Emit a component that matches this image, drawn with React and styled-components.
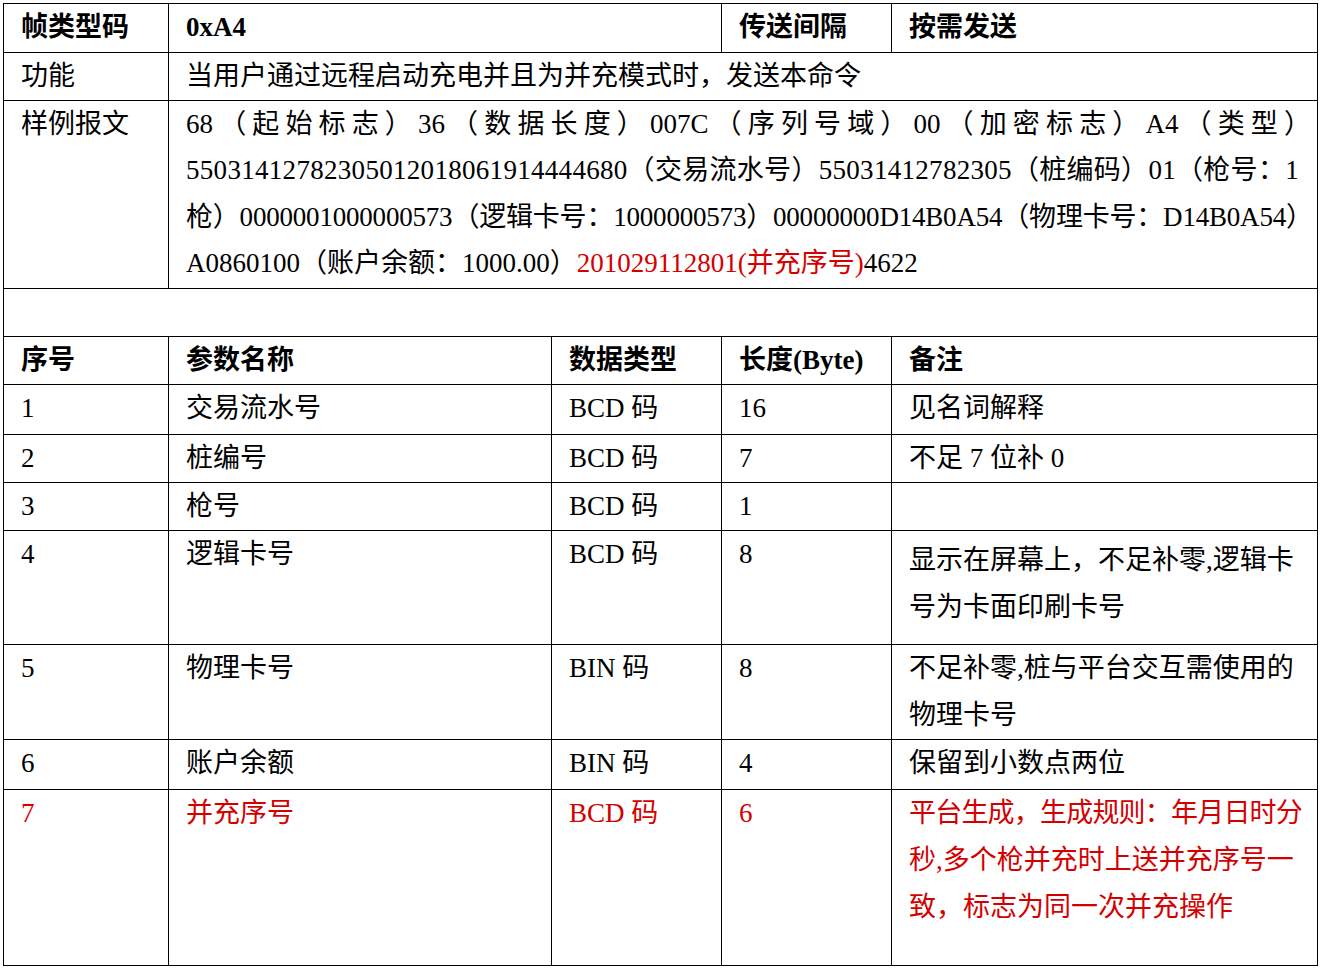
import React from 'react';
import styled, { createGlobalStyle } from 'styled-components';

const GlobalStyle = createGlobalStyle`
  body {
    margin: 0;
    background: #fff;
    font-family: "Liberation Serif", "Noto Sans CJK SC", serif;
  }
`;

const Page = styled.div`
  padding: 3px 0 0 3px;
`;

const Table = styled.table`
  border-collapse: collapse;
  table-layout: fixed;
  width: 1314px;
  font-size: 27px;
`;

const Col = styled.col`
  width: ${p => p.$w}px;
`;

const Row = styled.tr`
  height: ${p => p.$h}px;
`;

const Cell = styled.td`
  box-sizing: border-box;
  border: 1px solid #000;
  padding: ${p => (p.$drop ? 6 : 0)}px 2px 0 17px;
  vertical-align: top;
  line-height: 47px;
  white-space: nowrap;
  overflow: hidden;
  color: ${p => (p.$red ? '#d40000' : '#000')};
  font-weight: ${p => (p.$bold ? 700 : 400)};
`;

const Line = styled.div`
  text-align: ${p => (p.$spread ? 'justify' : 'left')};
  text-align-last: ${p => (p.$spread ? 'justify' : 'auto')};
  letter-spacing: ${p => p.$track || 0}px;
  padding-right: ${p => (p.$spread ? 4 : 0)}px;
`;

const SampleLine = styled(Line)`
  line-height: 46.5px;
`;

const Red = styled.span`
  color: #d40000;
`;

const sampleLines = [
  { text: '68（起始标志）36（数据长度）007C（序列号域）00（加密标志）A4（类型）', spread: true },
  { text: '55031412782305012018061914444680（交易流水号）55031412782305（桩编码）01（枪号：1', track: 0.3 },
  { text: '枪）0000001000000573（逻辑卡号：1000000573）00000000D14B0A54（物理卡号：D14B0A54）', track: -0.2 },
];

const params = [
  { no: '1', name: '交易流水号', type: 'BCD 码', len: '16', note: ['见名词解释'], h: 49.5 },
  { no: '2', name: '桩编号', type: 'BCD 码', len: '7', note: ['不足 7 位补 0'], h: 47.5 },
  { no: '3', name: '枪号', type: 'BCD 码', len: '1', note: [], h: 47.5 },
  { no: '4', name: '逻辑卡号', type: 'BCD 码', len: '8', note: ['显示在屏幕上，不足补零,逻辑卡', '号为卡面印刷卡号'], h: 114.5, drop: true },
  { no: '5', name: '物理卡号', type: 'BIN 码', len: '8', note: ['不足补零,桩与平台交互需使用的', '物理卡号'], h: 94.5 },
  { no: '6', name: '账户余额', type: 'BIN 码', len: '4', note: ['保留到小数点两位'], h: 49.5 },
  {
    no: '7',
    name: '并充序号',
    type: 'BCD 码',
    len: '6',
    note: ['平台生成，生成规则：年月日时分', '秒,多个枪并充时上送并充序号一', '致，标志为同一次并充操作'],
    track: -0.8,
    h: 176.5,
    red: true,
  },
];

export default function App() {
  return (
    <Page>
      <GlobalStyle />
      <Table>
        <colgroup>
          <Col $w={165} />
          <Col $w={383} />
          <Col $w={170} />
          <Col $w={170} />
          <Col $w={426} />
        </colgroup>
        <tbody>
          <Row $h={48.5}>
            <Cell $bold>帧类型码</Cell>
            <Cell $bold colSpan={2}>0xA4</Cell>
            <Cell $bold>传送间隔</Cell>
            <Cell $bold>按需发送</Cell>
          </Row>
          <Row $h={47.5}>
            <Cell>功能</Cell>
            <Cell colSpan={4}>当用户通过远程启动充电并且为并充模式时，发送本命令</Cell>
          </Row>
          <Row $h={188.5}>
            <Cell>样例报文</Cell>
            <Cell colSpan={4}>
              {sampleLines.map(line => (
                <SampleLine key={line.text} $spread={line.spread} $track={line.track}>
                  {line.text}
                </SampleLine>
              ))}
              <SampleLine>
                A0860100（账户余额：1000.00）<Red>201029112801(并充序号)</Red>4622
              </SampleLine>
            </Cell>
          </Row>
          <Row $h={47.5}>
            <Cell colSpan={5} />
          </Row>
          <Row $h={48.5}>
            <Cell $bold>序号</Cell>
            <Cell $bold>参数名称</Cell>
            <Cell $bold>数据类型</Cell>
            <Cell $bold>长度(Byte)</Cell>
            <Cell $bold>备注</Cell>
          </Row>
          {params.map(p => (
            <Row key={p.no} $h={p.h}>
              <Cell $red={p.red}>{p.no}</Cell>
              <Cell $red={p.red}>{p.name}</Cell>
              <Cell $red={p.red}>{p.type}</Cell>
              <Cell $red={p.red}>{p.len}</Cell>
              <Cell $red={p.red} $drop={p.drop}>
                {p.note.map((n, i) => (
                  <Line key={n} $track={i === 0 ? p.track : 0}>
                    {n}
                  </Line>
                ))}
              </Cell>
            </Row>
          ))}
        </tbody>
      </Table>
    </Page>
  );
}
